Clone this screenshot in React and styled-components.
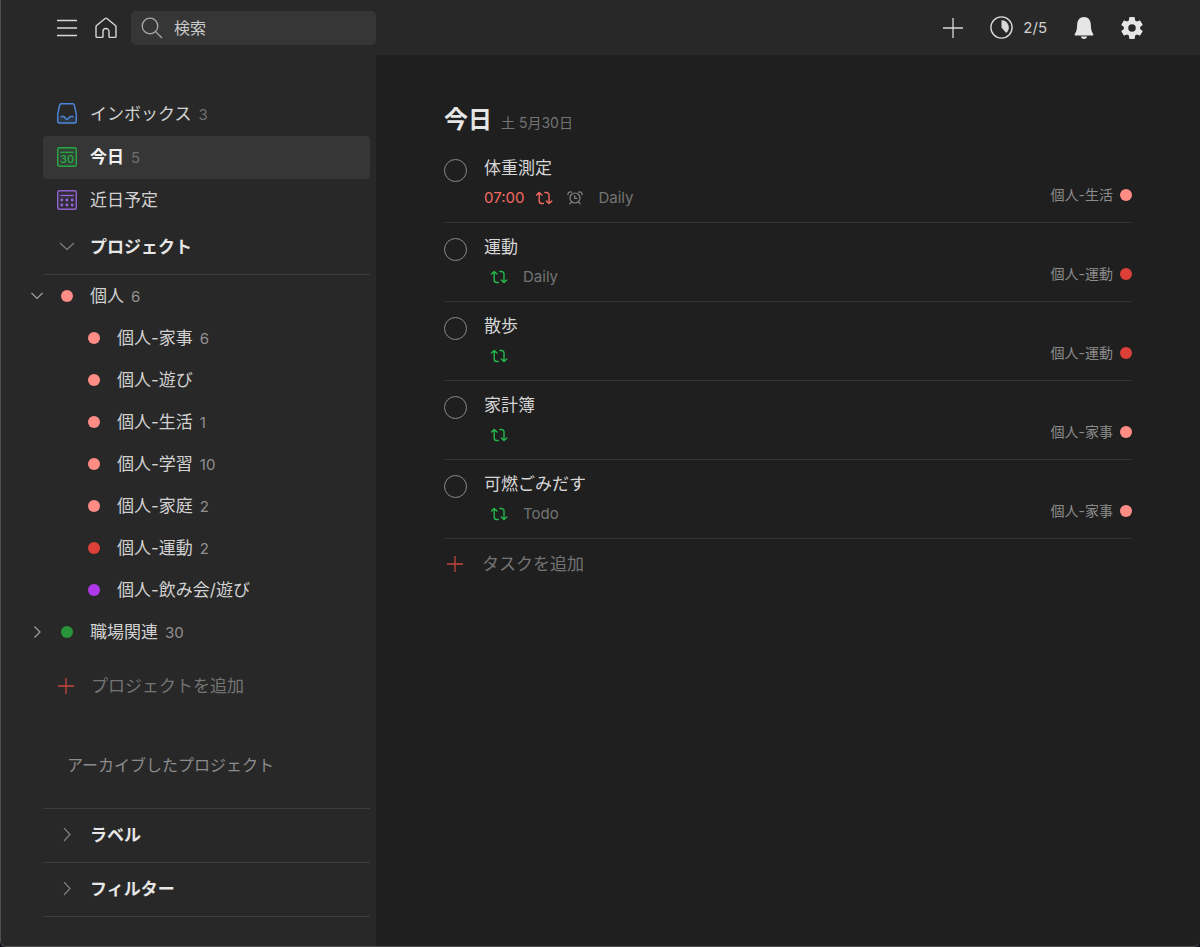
import React from "react";
import styled, { createGlobalStyle, css } from "styled-components";

const GlobalStyle = createGlobalStyle`
  *, *::before, *::after { box-sizing: border-box; }
  html { background: #0b0c14; }
  body {
    margin: 0;
    color: #dcdcdc;
    font-family: Inter, "Noto Sans CJK JP", sans-serif;
    font-size: 17px;
    line-height: 24px;
  }
  button, input { font: inherit; color: inherit; }
  h1, h2, p, ul { margin: 0; padding: 0; }
  ul { list-style: none; }
  svg { display: block; flex: none; }
`;

const Window = styled.div`
  min-height: 100vh;
  display: flex;
  flex-direction: column;
  background: #1f1f1f;
  border-left: 1px solid #505050;
  border-bottom: 1px solid #505050;
  border-radius: 0 0 6px 6px;
  overflow: hidden;
`;

const TopBar = styled.header`
  display: flex;
  align-items: center;
  justify-content: space-between;
  height: 55px;
  padding: 0 57px 0 55px;
  background: #282828;
`;

const BarGroup = styled.div`
  display: flex;
  align-items: center;
  gap: ${(p) => p.$gap}px;
`;

const PlainButton = styled.button`
  display: flex;
  align-items: center;
  padding: 0;
  border: 0;
  background: none;
  cursor: pointer;
`;

const Progress = styled(PlainButton)`
  gap: 10px;
  font-size: 15px;
  color: #d0d0d0;
`;

const SearchBox = styled.label`
  display: flex;
  align-items: center;
  gap: 11px;
  width: 245px;
  height: 34px;
  margin-left: -3px;
  padding: 0 10px;
  border-radius: 5px;
  background: #363636;
`;

const SearchInput = styled.input`
  flex: 1;
  min-width: 0;
  padding: 0;
  border: 0;
  outline: 0;
  background: none;
  font-size: 16px;
  &::placeholder { color: #c8c8c8; opacity: 1; }
`;

const Body = styled.div`
  flex: 1;
  display: flex;
`;

const Sidebar = styled.nav`
  flex: none;
  width: 375px;
  padding: 38px 6px 24px 29px;
  background: #282828;
`;

const Indented = styled.div`
  margin-left: 13px;
`;

const NavItem = styled.a`
  display: flex;
  align-items: center;
  height: 43px;
  padding: 0 0 2px 14px;
  border-radius: 4px;
  color: #d2d2d2;
  text-decoration: none;
  ${(p) => p.$active && css`
    background: #363636;
    color: #f0f0f0;
    font-weight: 700;
  `}
`;

const NavLabel = styled.span`
  margin-left: 13px;
`;

const Count = styled.span`
  margin: 2px 0 0 7px;
  font-size: 15px;
  font-weight: 400;
  color: ${(p) => (p.$dim ? "#707070" : "#909090")};
`;

const SectionHeader = styled(PlainButton)`
  width: 100%;
  height: ${(p) => p.$height}px;
  padding: 0 0 2px 14px;
  border-bottom: 1px solid #3c3c3c;
  color: #e6e6e6;
  text-align: left;
  font-weight: 700;
`;

const ProjectRow = styled.li`
  display: flex;
  align-items: center;
  height: 42px;
  padding-left: ${(p) => (p.$nested ? 58 : 0)}px;
`;

const Toggle = styled(PlainButton)`
  width: 31px;
`;

const ProjectLink = styled.a`
  display: flex;
  align-items: center;
  color: #d2d2d2;
  text-decoration: none;
`;

const Dot = styled.span`
  flex: none;
  width: 12px;
  height: 12px;
  border-radius: 50%;
  background: ${(p) => p.$color};
`;

const ProjectName = styled.span`
  margin-left: 17px;
`;

const AddButton = styled(PlainButton)`
  gap: ${(p) => p.$gap}px;
  height: 50px;
  padding-left: 3px;
  color: #747474;
`;

const AddProject = styled.div`
  padding: 8px 0 0 12px;
`;

const ArchiveLink = styled.a`
  display: flex;
  align-items: center;
  height: 98px;
  padding: 10px 0 0 24px;
  border-bottom: 1px solid #3c3c3c;
  font-size: 16px;
  color: #8c8c8c;
  text-decoration: none;
`;

const Main = styled.main`
  flex: 1;
  min-width: 0;
  padding: 45px 68px 24px;
`;

const TitleRow = styled.div`
  display: flex;
  align-items: baseline;
  gap: 9px;
  height: 44px;
`;

const Title = styled.h1`
  font-size: 24px;
  line-height: 40px;
  font-weight: 700;
  color: #e6e6e6;
`;

const DateText = styled.span`
  font-size: 14px;
  color: #747474;
`;

const Task = styled.li`
  display: flex;
  align-items: flex-start;
  height: 79px;
  padding-top: 12px;
  border-bottom: 1px solid #333333;
`;

const Check = styled.input`
  appearance: none;
  flex: none;
  width: 23px;
  height: 23px;
  margin: 3px 17px 0 0;
  border: 1px solid #8a8a8a;
  border-radius: 50%;
  cursor: pointer;
`;

const TaskText = styled.label`
  flex: 1;
  min-width: 0;
`;

const TaskTitle = styled.div`
  color: #d6d6d6;
`;

const Meta = styled.div`
  display: flex;
  align-items: center;
  height: 24px;
  margin-top: 6px;
  padding-left: ${(p) => (p.$indent ? 6 : 0)}px;
  font-size: 15px;
  color: #747474;
`;

const Time = styled.time`
  margin-right: 11px;
  color: #f46a62;
`;

const AlarmSlot = styled.span`
  margin-left: 14px;
`;

const Tag = styled.span`
  margin-left: 15px;
`;

const TaskProject = styled.a`
  display: flex;
  align-items: center;
  gap: 7px;
  margin-top: 27px;
  font-size: 14px;
  color: #8c8c8c;
  text-decoration: none;
`;

const Chevron = ({ open }) => (
  <svg width="20" height="14" viewBox="1 0 20 14" fill="none" stroke="#808080" strokeWidth="1.2">
    <path d={open ? "M4 3l7 6.5L18 3" : "M8 0L14 6.500L8 13"} />
  </svg>
);

const SmallChevron = ({ open }) => (
  <svg width="14" height="14" viewBox="0 0 14 14" fill="none" stroke="#a0a0a0" strokeWidth="1.2">
    <path d={open ? "M1.500 4l5.500 5.500L12.500 4" : "M4.500 1.500L10 7l-5.500 5.500"} />
  </svg>
);

const Plus = ({ size, color, width = 1.3 }) => (
  <svg width={size} height={size} viewBox="0 0 20 20" stroke={color} strokeWidth={width}>
    <path d="M10 0v20M0 10h20" />
  </svg>
);

const MenuIcon = () => (
  <svg width="22" height="22" viewBox="0 0 22 22" stroke="#d8d8d8" strokeWidth="1.3">
    <path d="M1 3.500h20M1 11h20M1 18.500h20" />
  </svg>
);

const HomeIcon = () => (
  <svg width="22" height="22" viewBox="0 0 22 22" fill="none" stroke="#d8d8d8" strokeWidth="1.4" strokeLinejoin="round">
    <path d="M1 9.800V19.400a1 1 0 0 0 1 1h5.200a.8.800 0 0 0 .8-.8v-5.100a3 3 0 0 1 6 0v5.100a.8.800 0 0 0 .8.800H20a1 1 0 0 0 1-1V9.800a1.800 1.800 0 0 0-.6-1.300l-8.500-7a1.400 1.400 0 0 0-1.800 0L1.600 8.500A1.800 1.800 0 0 0 1 9.800z" />
  </svg>
);

const SearchIcon = () => (
  <svg width="22" height="22" viewBox="0 0 22 22" fill="none" stroke="#a8a8a8" strokeWidth="1.3">
    <circle cx="9" cy="9" r="7.800" />
    <path d="M14.600 14.600L21 21" />
  </svg>
);

const ProgressIcon = () => (
  <svg width="23" height="23" viewBox="0 0 23 23" fill="none">
    <circle cx="11.500" cy="11.500" r="10.600" stroke="#d8d8d8" strokeWidth="1.400" />
    <path d="M11.500 4.200a7.300 7.300 0 0 1 4.700 12.900L11.500 11.500z" fill="#d8d8d8" />
  </svg>
);

const BellIcon = () => (
  <svg width="20" height="24" viewBox="0 0 20 24" fill="#e6e6e6">
    <path d="M10 1c-4.300 0-6.600 3.200-6.800 7.200-.2 4.500-.6 7.300-2.300 9.600-.6.900-.4 1.700.7 1.700h16.800c1.100 0 1.300-.8.700-1.700-1.700-2.300-2.100-5.100-2.300-9.600C16.600 4.200 14.300 1 10 1zM6.800 20.600h6.400c-.3 1.600-1.600 2.500-3.200 2.500s-2.900-.9-3.200-2.500z" />
  </svg>
);

const GearIcon = () => (
  <svg width="22" height="22" viewBox="2.300 2.300 19.400 19.400" fill="#e6e6e6">
    <path d="M19.140 12.940c.04-.3.060-.61.060-.94 0-.32-.02-.64-.07-.94l2.030-1.580a.49.49 0 0 0 .12-.61l-1.920-3.320a.488.488 0 0 0-.59-.22l-2.390.96c-.5-.38-1.030-.7-1.620-.94l-.36-2.540a.484.484 0 0 0-.48-.41h-3.840c-.24 0-.43.17-.47.41l-.36 2.540c-.59.24-1.130.57-1.620.94l-2.390-.96c-.22-.08-.47 0-.59.22L2.740 8.870c-.12.21-.08.47.12.61l2.030 1.580c-.05.3-.09.63-.09.94s.02.64.07.94l-2.030 1.580a.49.49 0 0 0-.12.61l1.920 3.320c.12.22.37.29.59.22l2.390-.96c.5.38 1.030.7 1.620.94l.36 2.540c.05.24.24.41.48.41h3.840c.24 0 .44-.17.47-.41l.36-2.540c.59-.24 1.130-.56 1.620-.94l2.390.96c.22.08.47 0 .59-.22l1.920-3.320c.12-.22.07-.47-.12-.61zM12 15.300a3.300 3.300 0 1 1 0-6.600 3.300 3.300 0 0 1 0 6.600z" />
  </svg>
);

const InboxIcon = () => (
  <svg width="20" height="21" viewBox="0 0 20 21" fill="none" stroke="#4d87dc" strokeWidth="1.400" strokeLinejoin="round">
    <path d="M4.200.8h11.600a1.600 1.600 0 0 1 1.500 1.200l2 9.500v7a1.500 1.500 0 0 1-1.500 1.500H2.200a1.500 1.500 0 0 1-1.500-1.500v-7L2.700 2A1.600 1.600 0 0 1 4.200.8z" />
    <path d="M.7 14v4.500A1.500 1.500 0 0 0 2.200 20h15.600a1.500 1.500 0 0 0 1.500-1.500V14" fill="#4d87dc" fillOpacity=".15" stroke="none" />
    <path d="M3.500 13.500h3.200c.5 0 .7.3.9.8.4 1.100 1.300 1.900 2.400 1.900s2-.8 2.400-1.900c.2-.5.4-.8.900-.8h3.200" />
  </svg>
);

const TodayIcon = () => (
  <svg width="20" height="20" viewBox="0 0 20 20">
    <rect x=".7" y=".7" width="18.600" height="18.600" rx="1.500" fill="#25b84c" fillOpacity=".1" stroke="#28a745" strokeWidth="1.400" />
    <path d="M3.300 5.300h13.400" stroke="#28a745" strokeWidth="1.300" />
    <text x="10" y="16.300" textAnchor="middle" fontFamily="Inter, sans-serif" fontSize="11" fontWeight="500" fill="#28b04a">30</text>
  </svg>
);

const UpcomingIcon = () => (
  <svg width="20" height="20" viewBox="0 0 20 20" fill="#9766dc">
    <rect x=".7" y=".7" width="18.600" height="18.600" rx="1.500" fillOpacity=".1" stroke="#8f62cf" strokeWidth="1.400" />
    <path d="M3.300 5.500h13.400" stroke="#9766dc" strokeWidth="1.300" />
    {[10, 15].map((y) => [4.800, 10, 15.200].map((x) => <circle key={`${x}-${y}`} cx={x} cy={y} r="1.400" />))}
  </svg>
);

const RepeatIcon = ({ color }) => (
  <svg width="18" height="14" viewBox="0 0 18 14" fill="none" stroke={color} strokeWidth="1.400" strokeLinecap="round" strokeLinejoin="round">
    <path d="M1.500 4l2.700-2.500L7 4M4.200 1.700v8.300a2.500 2.500 0 0 0 2.500 2.500h1.600" />
    <path d="M11.300 10l2.700 2.500 2.800-2.500M14 12.300V4a2.500 2.500 0 0 0-2.500-2.500H9.900" />
  </svg>
);

const AlarmIcon = () => (
  <svg width="16" height="14" viewBox="0 0 16 14" fill="none" stroke="#858585" strokeWidth="1.200" strokeLinecap="round">
    <circle cx="8" cy="7" r="5" />
    <path d="M7.700 4.600v2.700h2.300M1 3.700a2.400 2.400 0 0 1 3.600-2.500M15 3.700a2.400 2.400 0 0 0-3.600-2.500M4.300 11l-1.500 1.900M11.700 11l1.500 1.900" />
  </svg>
);

const SALMON = "#ff8d85";
const RED = "#dc4038";

const children = [
  { name: "個人-家事", count: 6, color: SALMON },
  { name: "個人-遊び", color: SALMON },
  { name: "個人-生活", count: 1, color: SALMON },
  { name: "個人-学習", count: 10, color: SALMON },
  { name: "個人-家庭", count: 2, color: SALMON },
  { name: "個人-運動", count: 2, color: RED },
  { name: "個人-飲み会/遊び", color: "#af38eb" },
];

const tasks = [
  { title: "体重測定", time: "07:00", alarm: true, tag: "Daily", project: "個人-生活", color: SALMON },
  { title: "運動", tag: "Daily", project: "個人-運動", color: RED },
  { title: "散歩", project: "個人-運動", color: RED },
  { title: "家計簿", project: "個人-家事", color: SALMON },
  { title: "可燃ごみだす", tag: "Todo", project: "個人-家事", color: SALMON },
];

const Project = ({ name, count, color, nested, open }) => (
  <ProjectRow $nested={nested}>
    {!nested && (
      <Toggle aria-label={name} aria-expanded={open}>
        <SmallChevron open={open} />
      </Toggle>
    )}
    <ProjectLink href="#project">
      <Dot $color={color} />
      <ProjectName>{name}</ProjectName>
      {count && <Count>{count}</Count>}
    </ProjectLink>
  </ProjectRow>
);

const TaskItem = ({ id, task }) => (
  <Task>
    <Check type="checkbox" id={id} />
    <TaskText htmlFor={id}>
      <TaskTitle>{task.title}</TaskTitle>
      <Meta $indent={!task.time}>
        {task.time && <Time>{task.time}</Time>}
        <RepeatIcon color={task.time ? "#f46a62" : "#25b84c"} />
        {task.alarm && <AlarmSlot><AlarmIcon /></AlarmSlot>}
        {task.tag && <Tag>{task.tag}</Tag>}
      </Meta>
    </TaskText>
    <TaskProject href="#project">
      {task.project}
      <Dot $color={task.color} />
    </TaskProject>
  </Task>
);

export default function App() {
  return (
    <>
      <GlobalStyle />
      <Window>
        <TopBar>
          <BarGroup $gap={17}>
            <PlainButton aria-label="メニュー"><MenuIcon /></PlainButton>
            <PlainButton aria-label="ホーム"><HomeIcon /></PlainButton>
            <SearchBox>
              <SearchIcon />
              <SearchInput type="search" placeholder="検索" aria-label="検索" />
            </SearchBox>
          </BarGroup>
          <BarGroup $gap={27}>
            <PlainButton aria-label="追加"><Plus size={20} color="#d8d8d8" /></PlainButton>
            <Progress><ProgressIcon />2/5</Progress>
            <PlainButton aria-label="通知"><BellIcon /></PlainButton>
            <PlainButton aria-label="設定"><GearIcon /></PlainButton>
          </BarGroup>
        </TopBar>
        <Body>
          <Sidebar>
            <Indented>
              <NavItem href="#inbox">
                <InboxIcon />
                <NavLabel>インボックス</NavLabel>
                <Count $dim>3</Count>
              </NavItem>
              <NavItem href="#today" $active>
                <TodayIcon />
                <NavLabel>今日</NavLabel>
                <Count $dim>5</Count>
              </NavItem>
              <NavItem href="#upcoming">
                <UpcomingIcon />
                <NavLabel>近日予定</NavLabel>
              </NavItem>
              <SectionHeader $height={53} aria-expanded="true">
                <Chevron open />
                <NavLabel>プロジェクト</NavLabel>
              </SectionHeader>
            </Indented>
            <ul>
              <Project name="個人" count={6} color={SALMON} open />
              {children.map((c) => <Project key={c.name} {...c} nested />)}
              <Project name="職場関連" count={30} color="#299438" open={false} />
            </ul>
            <Indented>
              <AddProject>
                <AddButton $gap={17}>
                  <Plus size={16} color="#c8453e" width={1.600} />
                  プロジェクトを追加
                </AddButton>
              </AddProject>
              <ArchiveLink href="#archived">アーカイブしたプロジェクト</ArchiveLink>
              <SectionHeader $height={54} aria-expanded="false">
                <Chevron />
                <NavLabel>ラベル</NavLabel>
              </SectionHeader>
              <SectionHeader $height={54} aria-expanded="false">
                <Chevron />
                <NavLabel>フィルター</NavLabel>
              </SectionHeader>
            </Indented>
          </Sidebar>
          <Main>
            <TitleRow>
              <Title>今日</Title>
              <DateText>土 5月30日</DateText>
            </TitleRow>
            <ul>
              {tasks.map((t, i) => <TaskItem key={t.title} id={`task-${i}`} task={t} />)}
            </ul>
            <AddButton $gap={19}>
              <Plus size={16} color="#c8453e" width={1.600} />
              タスクを追加
            </AddButton>
          </Main>
        </Body>
      </Window>
    </>
  );
}
